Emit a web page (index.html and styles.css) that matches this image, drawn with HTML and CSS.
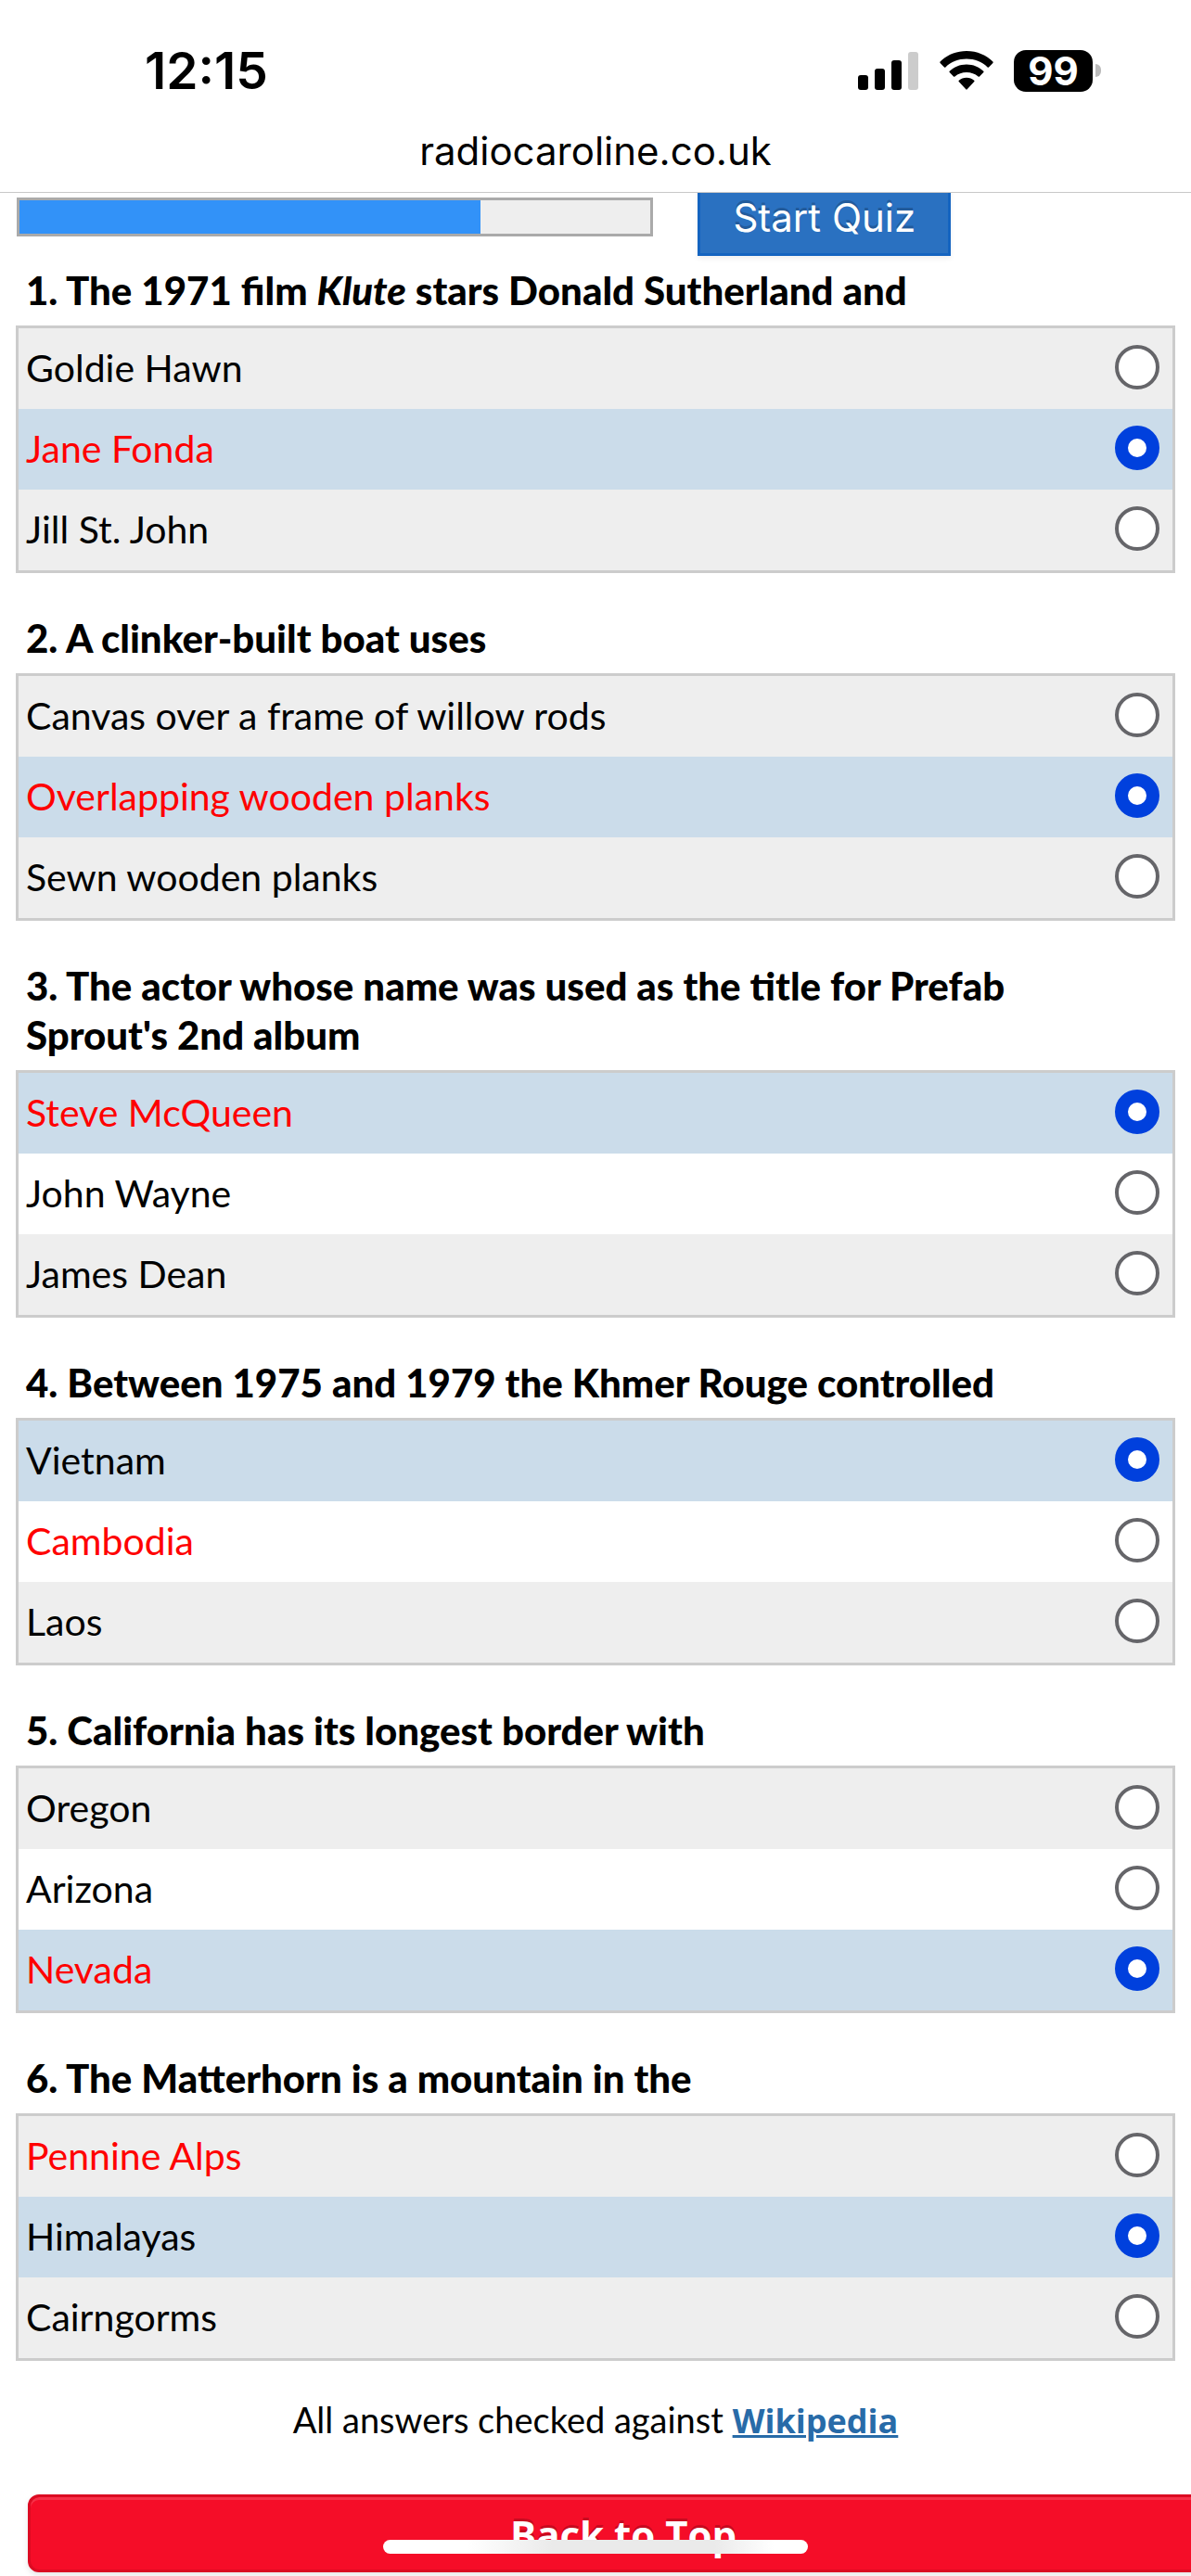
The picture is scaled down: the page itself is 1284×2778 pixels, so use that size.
FILE: index.html
```html
<!DOCTYPE html>
<html lang="en">
<head>
  <meta charset="UTF-8" />
  <meta name="viewport" content="width=device-width, initial-scale=1.0" />
  <title>Radio Caroline Quiz</title>
  <link rel="stylesheet" href="styles.css">
</head>
<body>
  <header class="top">
    <div class="status">
      <span class="time">12:15</span>
      <div class="indicators">
        <svg class="signal" viewBox="0 0 65 42" width="65" height="42" aria-hidden="true">
          <rect x="0" y="26" width="11" height="16" rx="3" />
          <rect x="18" y="19" width="11" height="23" rx="3" />
          <rect x="36" y="10" width="11" height="32" rx="3" />
          <rect x="54" y="1" width="11" height="41" rx="3" fill="#ccc" />
        </svg>
        <svg class="wifi" viewBox="0 0 58 42" width="58" height="42" aria-hidden="true">
          <path d="M29 0C17.500 0 7.500 4.500 0.600 11.600Q0 12.300 0.600 13L5 17.400Q5.700 18 6.400 17.400C12.400 11.800 20.200 8.600 29 8.600S45.600 11.800 51.600 17.400Q52.300 18 53 17.400L57.400 13Q58 12.300 57.400 11.600C50.500 4.500 40.500 0 29 0Z" />
          <path d="M29 14.400C21.800 14.400 15.500 17.200 10.700 21.700Q10 22.400 10.700 23.100L15 27.400Q15.700 28 16.400 27.400C19.800 24.600 24.200 22.900 29 22.900S38.200 24.600 41.600 27.400Q42.300 28 43 27.400L47.300 23.100Q48 22.400 47.300 21.700C42.500 17.200 36.200 14.400 29 14.400Z" />
          <path d="M29 28.700C25.800 28.700 23 29.800 20.800 31.700Q20 32.400 20.700 33.100L28.300 41.300Q29 42 29.700 41.300L37.300 33.100Q38 32.400 37.200 31.700C35 29.800 32.200 28.700 29 28.700Z" />
        </svg>
        <span class="battery">99</span>
        <span class="battery-tip"></span>
      </div>
    </div>
    <div class="address">radiocaroline.co.uk</div>
  </header>

  <main>
    <div class="controls">
      <div class="progress"><div class="progress-bar" style="width: 73%"></div></div>
      <button type="button" class="start-button">Start Quiz</button>
    </div>

    <!-- Questions: "correct" marks the right answer -->
    <section class="question">
      <h2 id="q1">1. The 1971 film <em>Klute</em> stars Donald Sutherland and</h2>
      <div class="answers" role="radiogroup" aria-labelledby="q1">
        <label>Goldie Hawn <input type="radio" name="q1"></label>
        <label class="correct">Jane Fonda <input type="radio" name="q1" checked></label>
        <label>Jill St. John <input type="radio" name="q1"></label>
      </div>
    </section>

    <section class="question">
      <h2 id="q2">2. A clinker-built boat uses</h2>
      <div class="answers" role="radiogroup" aria-labelledby="q2">
        <label>Canvas over a frame of willow rods <input type="radio" name="q2"></label>
        <label class="correct">Overlapping wooden planks <input type="radio" name="q2" checked></label>
        <label>Sewn wooden planks <input type="radio" name="q2"></label>
      </div>
    </section>

    <section class="question">
      <h2 id="q3">3. The actor whose name was used as the title for Prefab Sprout's 2nd album</h2>
      <div class="answers" role="radiogroup" aria-labelledby="q3">
        <label class="correct">Steve McQueen <input type="radio" name="q3" checked></label>
        <label>John Wayne <input type="radio" name="q3"></label>
        <label>James Dean <input type="radio" name="q3"></label>
      </div>
    </section>

    <section class="question">
      <h2 id="q4">4. Between 1975 and 1979 the Khmer Rouge controlled</h2>
      <div class="answers" role="radiogroup" aria-labelledby="q4">
        <label>Vietnam <input type="radio" name="q4" checked></label>
        <label class="correct">Cambodia <input type="radio" name="q4"></label>
        <label>Laos <input type="radio" name="q4"></label>
      </div>
    </section>

    <section class="question">
      <h2 id="q5">5. California has its longest border with</h2>
      <div class="answers" role="radiogroup" aria-labelledby="q5">
        <label>Oregon <input type="radio" name="q5"></label>
        <label>Arizona <input type="radio" name="q5"></label>
        <label class="correct">Nevada <input type="radio" name="q5" checked></label>
      </div>
    </section>

    <section class="question">
      <h2 id="q6">6. The Matterhorn is a mountain in the</h2>
      <div class="answers" role="radiogroup" aria-labelledby="q6">
        <label class="correct">Pennine Alps <input type="radio" name="q6"></label>
        <label>Himalayas <input type="radio" name="q6" checked></label>
        <label>Cairngorms <input type="radio" name="q6"></label>
      </div>
    </section>

    <p class="source">All answers checked against <a href="#">Wikipedia</a></p>

    <button type="button" class="top-button">Back to Top</button>
  </main>

  <div class="home-indicator"></div>
</body>
</html>
```
FILE: styles.css
```css
* { box-sizing: border-box; }
body {
  margin: 0;
  background: #fff;
  color: #000;
  font-family: Lato, "Open Sans", sans-serif;
  font-size: 41px;
  overflow-x: hidden;
}

/* Status bar and address */
.top {
  position: relative;
  z-index: 1;
  background: #fff;
  font-family: Inter, sans-serif;
  border-bottom: 1px solid #c8c8c8;
}
.status {
  display: flex;
  justify-content: space-between;
  align-items: center;
  height: 128px;
  padding: 24px 97px 0 156px;
}
.time { font-size: 55px; font-weight: 600; }
.indicators { display: flex; align-items: center; }
.signal { margin-right: 23px; }
.wifi { margin-right: 22px; }
.battery {
  width: 85px;
  height: 45px;
  border-radius: 13px;
  background: #000;
  color: #fff;
  font-size: 42px;
  font-weight: 700;
  line-height: 45px;
  text-align: center;
}
.battery-tip {
  width: 6px;
  height: 14px;
  margin-left: 3px;
  border-radius: 0 6px 6px 0;
  background: #bbb;
}
.address {
  height: 79px;
  font-size: 42px;
  line-height: 70px;
  text-align: center;
}

/* Progress and start button, partly scrolled under the header */
.controls {
  display: flex;
  align-items: center;
  gap: 48px;
  margin: -16px 0 11px;
  padding: 0 18px;
}
.progress {
  width: 55%;
  height: 42px;
  border: 3px solid #aaa;
  background: #eee;
}
.progress-bar { height: 100%; background: #3292f8; }
.start-button {
  height: 84px;
  padding: 0 35px;
  border: 3px solid #1464c0;
  background: #2a71c1;
  color: #fff;
  font-family: Inter, sans-serif;
  font-size: 42px;
  text-shadow: 0 -3px 0 rgba(0, 0, 0, 0.2);
  box-shadow: 0 3px 6px rgba(0, 0, 0, 0.06);
}

/* Questions */
.question { margin: 0 17px; }
.question + .question { margin-top: 44px; }
.question h2 {
  margin: 0 0 11px;
  padding: 0 140px 0 11px;
  font-size: 42px;
  font-weight: 900;
  line-height: 53px;
}
.answers { border: 3px solid #ccc; }
.answers label {
  display: flex;
  justify-content: space-between;
  align-items: center;
  height: 87px;
  padding: 0 14px 3px 8px;
}
.answers label:nth-child(odd) { background: #eee; }
.answers label:has(:checked) { background: #cbdcea; }
.answers .correct { color: #f00; }
.answers input {
  appearance: none;
  width: 48px;
  height: 48px;
  margin: 0;
  border: 4px solid #656569;
  border-radius: 50%;
  background: #fff;
}
.answers input:checked { border: 14px solid #0040dd; }

/* Footer */
.source {
  margin: 37px 0 53px;
  font-size: 38px;
  line-height: 53px;
  text-align: center;
}
.source a {
  color: #286ba8;
  font-family: "Open Sans", sans-serif;
  font-size: 36px;
  font-weight: 700;
  text-decoration-thickness: 3px;
}
.top-button {
  display: block;
  width: 100%;
  height: 84px;
  margin: 0 0 4px 30px;
  border: 3px solid #dc0b22;
  border-radius: 12px;
  background: #f50d28;
  color: #fff;
  font-family: "Open Sans", sans-serif;
  font-size: 42px;
  font-weight: 700;
  text-shadow: 0 -3px 0 rgba(0, 0, 0, 0.2);
  box-shadow: inset 0 3px 0 rgba(255, 255, 255, 0.15), 0 3px 6px rgba(0, 0, 0, 0.1);
}
main { border-bottom: 1px solid #ccc; }
.home-indicator {
  position: fixed;
  bottom: 24px;
  left: 50%;
  z-index: 2;
  width: 458px;
  height: 15px;
  margin-left: -229px;
  border-radius: 8px;
  background: linear-gradient(90deg, #fff 20%, #eaeaea 40%, #eaeaea 78%, #fff 92%);
}
```
